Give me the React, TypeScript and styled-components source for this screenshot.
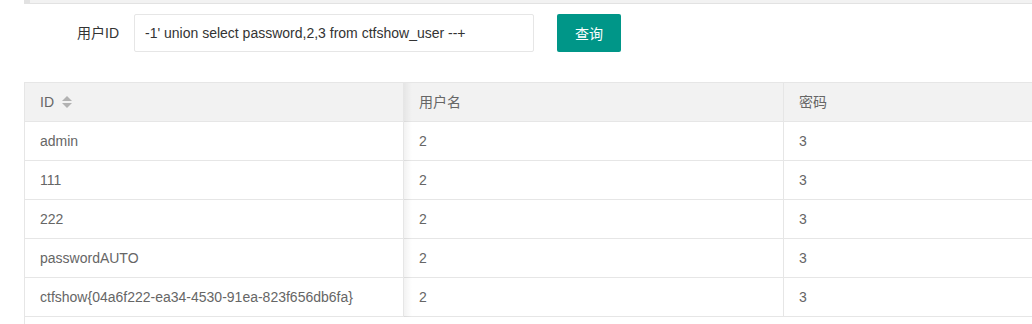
import React from 'react';
import styled, { createGlobalStyle } from 'styled-components';

const GlobalStyle = createGlobalStyle`
  html, body {
    margin: 0;
    padding: 0;
    background: #fff;
    overflow: hidden;
    font-family: "Liberation Sans", "Noto Sans CJK SC", sans-serif;
    font-size: 14px;
    color: #666;
  }
`;

const Page = styled.div`
  width: 1032px;
  height: 324px;
  overflow: hidden;
  padding-left: 24px;
  box-sizing: border-box;
`;

const QuoteEnd = styled.div`
  height: 3px;
  background: #f2f2f2;
  border-left: 6px solid #e2e2e2;
  border-bottom: 1px solid #e2e2e2;
`;

const FormRow = styled.form`
  display: flex;
  align-items: center;
  margin-top: 10px;
`;

const Label = styled.label`
  width: 80px;
  padding: 9px 15px;
  text-align: right;
  line-height: 20px;
  color: #333;
  box-sizing: content-box;
`;

const Input = styled.input`
  width: 400px;
  height: 38px;
  box-sizing: border-box;
  padding: 0 10px;
  border: 1px solid #e6e6e6;
  border-radius: 2px;
  font-family: inherit;
  font-size: 14px;
  color: #333;
  outline: none;
`;

const Button = styled.button`
  height: 38px;
  margin-left: 23px;
  padding: 0 18px;
  border: none;
  border-radius: 2px;
  background: #009688;
  color: #fff;
  font-family: inherit;
  font-size: 14px;
  cursor: pointer;
`;

const TableBox = styled.div`
  margin-top: 30px;
  width: 1160px;
  border-left: 1px solid #e6e6e6;
  padding-bottom: 20px;
`;

const Table = styled.table`
  border-collapse: collapse;
  table-layout: fixed;
  width: 1139px;
  margin-left: -1px;
`;

const Cell = styled.td<{ $head?: boolean; $fixed?: boolean }>`
  position: relative;
  padding: 9px 15px;
  line-height: 20px;
  height: 20px;
  border: 1px solid #e6e6e6;
  text-align: left;
  font-weight: normal;
  color: #666;
  background: ${({ $head }) => ($head ? '#f2f2f2' : '#fff')};
  white-space: nowrap;

  ${({ $fixed }) =>
    $fixed &&
    `
    &::after {
      content: '';
      position: absolute;
      top: 0;
      bottom: -1px;
      left: 100%;
      margin-left: 1px;
      width: 8px;
      background: linear-gradient(to right, rgba(0, 0, 0, 0.05), rgba(0, 0, 0, 0));
      z-index: 1;
    }
  `}
`;

const Sort = styled.span`
  display: inline-block;
  position: relative;
  width: 10px;
  height: 20px;
  margin-left: 8px;
  vertical-align: top;
`;

const Edge = styled.i<{ $dir: 'up' | 'down' }>`
  position: absolute;
  left: 0;
  width: 0;
  height: 0;
  border-left: 5px solid transparent;
  border-right: 5px solid transparent;
  ${({ $dir }) =>
    $dir === 'up'
      ? 'top: 4px; border-bottom: 5px solid #b2b2b2;'
      : 'top: 11px; border-top: 5px solid #b2b2b2;'}
`;

const rows = [
  ['admin', '2', '3'],
  ['111', '2', '3'],
  ['222', '2', '3'],
  ['passwordAUTO', '2', '3'],
  ['ctfshow{04a6f222-ea34-4530-91ea-823f656db6fa}', '2', '3'],
];

export default function App() {
  return (
    <Page>
      <GlobalStyle />
      <QuoteEnd />
      <FormRow onSubmit={(e) => e.preventDefault()}>
        <Label>用户ID</Label>
        <Input defaultValue="-1' union select password,2,3 from ctfshow_user --+" />
        <Button type="submit">查询</Button>
      </FormRow>
      <TableBox>
        <Table>
          <colgroup>
            <col style={{ width: 379 }} />
            <col style={{ width: 380 }} />
            <col style={{ width: 380 }} />
          </colgroup>
          <thead>
            <tr>
              <Cell as="th" $head $fixed>
                ID
                <Sort>
                  <Edge $dir="up" />
                  <Edge $dir="down" />
                </Sort>
              </Cell>
              <Cell as="th" $head>用户名</Cell>
              <Cell as="th" $head>密码</Cell>
            </tr>
          </thead>
          <tbody>
            {rows.map((r) => (
              <tr key={r[0]}>
                <Cell $fixed>{r[0]}</Cell>
                <Cell>{r[1]}</Cell>
                <Cell>{r[2]}</Cell>
              </tr>
            ))}
          </tbody>
        </Table>
      </TableBox>
    </Page>
  );
}
